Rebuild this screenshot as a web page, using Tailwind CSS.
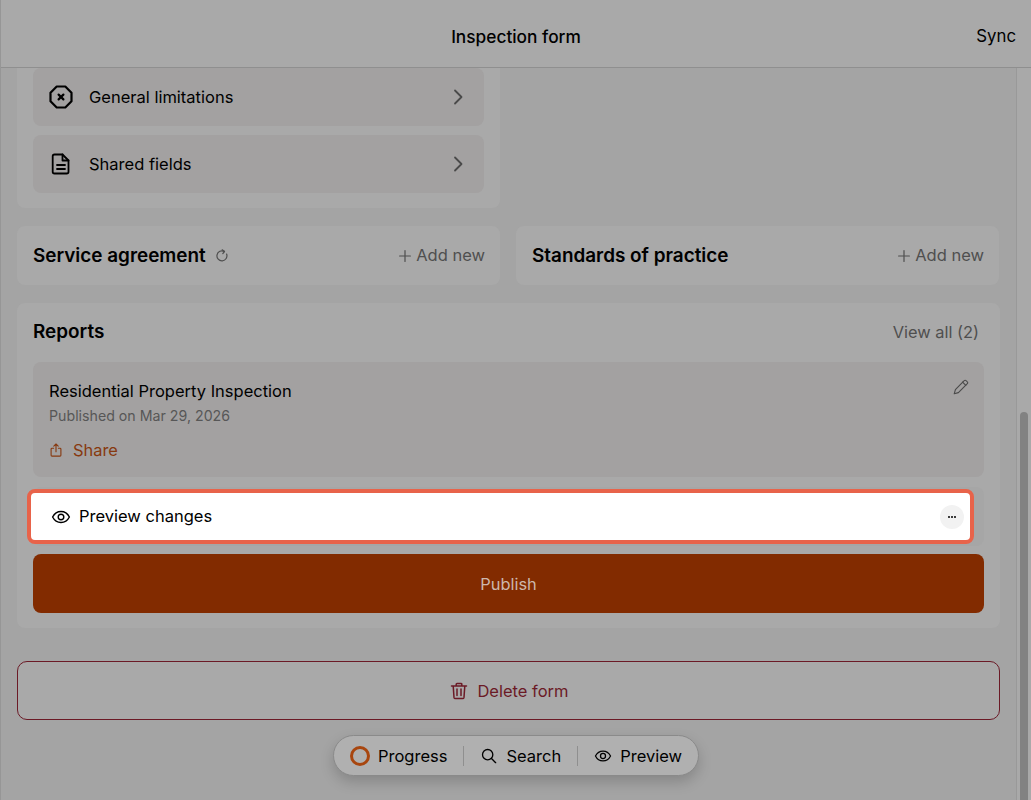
<!DOCTYPE html>
<html lang="en">
<head>
  <meta charset="UTF-8" />
  <title>Inspection form</title>
  <script src="https://cdn.jsdelivr.net/npm/@tailwindcss/browser@4"></script>
</head>
<body class="bg-[#a4a4a4] font-['Inter',sans-serif] text-black overflow-hidden">
  <div class="relative h-[800px] w-[1031px] overflow-hidden border-l border-[#969696]">
    <!-- header -->
    <header class="relative z-10 flex h-[68px] items-center justify-center border-b border-[#8f8f8f] bg-[#a9a9a9] pt-[6px]">
      <h1 class="text-[17.3px] font-medium">Inspection form</h1>
      <button class="absolute right-[15px] top-[25px] text-[16.8px] leading-[22px]">Sync</button>
    </header>

    <div class="flex h-[732px]">
      <main class="w-[1015px] shrink-0 overflow-hidden pl-4 pr-[15px]">
        <!-- top row, scrolled under the header -->
        <section class="mt-[-20px] flex w-[483px] flex-col gap-[9px] rounded-b-lg bg-[#a9a9a9] px-4 pb-[15px] pt-[20px]">
          <div class="flex h-[58px] items-center rounded-lg bg-[#a3a1a1] pl-4 pr-[18px]">
            <svg class="h-6 w-6" viewBox="0 0 24 24" fill="none" stroke="#000" stroke-width="2.200" stroke-linecap="round" stroke-linejoin="round"><path d="M7.700 1.500h8.600l6.200 6.200v8.600l-6.200 6.200H7.700l-6.200-6.200V7.700z"/><path d="M9.600 9.600l4.800 4.800M14.400 9.600l-4.800 4.800"/></svg>
            <span class="ml-4 flex-1 text-[16.500px]">General limitations</span>
            <svg class="h-4 w-4" viewBox="0 0 16 16" fill="none" stroke="#4a4a4a" stroke-width="1.800" stroke-linecap="round" stroke-linejoin="round"><path d="M5 1.500L11.500 8 5 14.500"/></svg>
          </div>
          <div class="flex h-[58px] items-center rounded-lg bg-[#a3a1a1] pl-4 pr-[18px]">
            <svg class="h-6 w-6" viewBox="0 0 24 24" fill="none" stroke="#000" stroke-width="1.800" stroke-linecap="round" stroke-linejoin="round"><path d="M5.500 2.500h8l6 6v11.200a1.800 1.800 0 0 1-1.800 1.800H5.500a1.800 1.800 0 0 1-1.800-1.800V4.300a1.800 1.800 0 0 1 1.800-1.800z"/><path d="M13.500 2.500v6h6M8 13h8M8 17h8"/></svg>
            <span class="ml-4 flex-1 text-[16.500px]">Shared fields</span>
            <svg class="h-4 w-4" viewBox="0 0 16 16" fill="none" stroke="#4a4a4a" stroke-width="1.800" stroke-linecap="round" stroke-linejoin="round"><path d="M5 1.500L11.500 8 5 14.500"/></svg>
          </div>
        </section>

        <div class="mt-[18px] flex gap-4">
          <section class="flex h-[59px] w-[483px] items-center rounded-lg bg-[#a9a9a9] pl-4 pr-[15px]">
            <h2 class="pt-px text-[18.900px] font-semibold">Service agreement</h2>
            <svg class="ml-[9px] h-[14px] w-[14px]" viewBox="0 0 14 14" fill="none" stroke="#4f4f4f" stroke-width="1.200" stroke-linecap="round" stroke-linejoin="round"><path d="M11.600 5a5 5 0 1 1-2.300-2.600"/><path d="M7.200 0.800l2.300 1.700-1.700 2.100"/></svg>
            <button class="ml-auto flex items-center gap-[5px] text-[16.500px] text-[#4f4f4f]"><svg class="h-3 w-3" viewBox="0 0 12 12" stroke="#4f4f4f" stroke-width="1.200" stroke-linecap="round"><path d="M6 .6v10.800M.6 6h10.800"/></svg>Add new</button>
          </section>
          <section class="flex h-[59px] w-[483px] items-center rounded-lg bg-[#a9a9a9] pl-4 pr-[15px]">
            <h2 class="pt-px text-[18.900px] font-semibold">Standards of practice</h2>
            <button class="ml-auto flex items-center gap-[5px] text-[16.500px] text-[#4f4f4f]"><svg class="h-3 w-3" viewBox="0 0 12 12" stroke="#4f4f4f" stroke-width="1.200" stroke-linecap="round"><path d="M6 .6v10.800M.6 6h10.800"/></svg>Add new</button>
          </section>
        </div>

        <!-- reports -->
        <section class="mt-[18px] h-[325px] w-[983px] rounded-lg bg-[#a9a9a9] px-4 pt-[14px]">
          <div class="flex h-[30px] items-center justify-between pr-[5px]">
            <h2 class="pt-px text-[18.900px] font-semibold">Reports</h2>
            <span class="text-[16.400px] text-[#4f4f4f]">View all (2)</span>
          </div>
          <div class="mt-[15px] flex h-[115px] items-start rounded-lg bg-[#a3a1a1] px-4 pt-[17px]">
            <div class="flex-1">
              <p class="text-[16.500px] leading-6">Residential Property Inspection</p>
              <p class="mt-[3px] text-[14.200px] leading-5 text-[#575757]">Published on Mar 29, 2026</p>
              <div class="mt-[12px] flex items-center gap-[10px] text-[16.400px] leading-6 text-[#87390f]">
                <svg class="h-[14px] w-[14px]" viewBox="0 0 14 14" fill="none" stroke="#87390f" stroke-width="1.100" stroke-linecap="round" stroke-linejoin="round"><path d="M7 8.800V1M4.800 3.100L7 1l2.200 2.100"/><path d="M4.600 5.200H3a.9.9 0 0 0-.9.9v6.100a.9.9 0 0 0 .9.9h8a.9.9 0 0 0 .9-.9V6.100a.9.9 0 0 0-.9-.9H9.400"/></svg>
                Share
              </div>
            </div>
            <svg class="mr-[-1px] h-[16px] w-[16px]" viewBox="0 0 16 16" fill="none" stroke="#4a4a4a" stroke-width="1.100" stroke-linecap="round" stroke-linejoin="round"><path d="M11.200 1.600a1.300 1.300 0 0 1 1.900 0l1.200 1.200a1.300 1.300 0 0 1 0 1.900L5.400 13.600 1.200 14.800l1.200-4.200z"/><path d="M9.600 3.200l3.200 3.200"/></svg>
          </div>

          <!-- row under the tour highlight -->
          <div class="relative mt-[10px] h-[59px] rounded-lg bg-[#a6a6a6]">
            <div class="absolute left-[-6px] top-[2px] flex h-[55px] w-[947px] items-center rounded-lg border-[4px] border-[#e8634a] bg-white pl-[20px] pr-[6px]">
              <svg class="h-5 w-5" viewBox="0 0 20 20" fill="none" stroke="#000" stroke-width="1.400" stroke-linecap="round" stroke-linejoin="round"><path d="M1.600 10C3.500 6.300 6.500 4.500 10 4.500s6.500 1.800 8.400 5.500c-1.900 3.700-4.900 5.500-8.400 5.500S3.500 13.700 1.600 10z"/><circle cx="10" cy="10" r="2.800"/></svg>
              <span class="ml-[8px] flex-1 text-[16.500px]">Preview changes</span>
              <span class="flex h-6 w-6 items-center justify-center rounded-full bg-[#f2f2f2]">
                <svg class="h-3 w-3" viewBox="0 0 12 12" fill="#000"><circle cx="3" cy="6" r="1"/><circle cx="6" cy="6" r="1"/><circle cx="9" cy="6" r="1"/></svg>
              </span>
            </div>
          </div>

          <button class="mt-[8px] flex h-[59px] w-full items-center justify-center rounded-lg bg-[#822b00] pt-px text-[16.400px] text-[#cdb8ac]">Publish</button>
        </section>

        <button class="mt-[33px] flex h-[59px] w-[983px] items-center justify-center gap-[9px] rounded-[10px] border-[1.500px] border-[#6b1a26] bg-[#a9a9a9] pl-[2px] pt-px text-[16.500px] text-[#6b1a26]">
          <svg class="mb-px h-[18px] w-[18px]" viewBox="0 0 18 18" fill="none" stroke="#6b1a26" stroke-width="1.500" stroke-linecap="round" stroke-linejoin="round"><path d="M1.500 4h15M6.200 4V2.200a.8.8 0 0 1 .8-.8h4a.8.8 0 0 1 .8.8V4M3.200 4l.8 11.400a1.400 1.400 0 0 0 1.400 1.200h7.200a1.400 1.400 0 0 0 1.400-1.200L14.800 4M7 7v6.500M11 7v6.500"/></svg>
          Delete form
        </button>
      </main>

      <!-- scrollbar -->
      <div class="relative w-[16px] flex-1 border-l border-[#999] bg-[#a9a9a9]">
        <div class="absolute left-[3px] top-[344px] h-[400px] w-[8px] rounded-full bg-[#828282]"></div>
      </div>
    </div>

    <!-- floating toolbar -->
    <nav class="absolute left-[332px] top-[735px] flex h-[41px] w-[366px] items-center rounded-full border border-[#8a8a8a] bg-[#b0b0b0] pl-4 pt-px text-[16.500px] shadow-[0_6px_14px_rgba(0,0,0,0.18)]">
      <span class="h-5 w-5 rounded-full border-[3px] border-[#a8460f]"></span>
      <span class="ml-[8px]">Progress</span>
      <span class="ml-4 h-5 w-px bg-[#8f8f8f]"></span>
      <svg class="ml-[17px] h-4 w-4" viewBox="0 0 18 18" fill="none" stroke="#000" stroke-width="1.500" stroke-linecap="round"><circle cx="7.500" cy="7.500" r="5.800"/><path d="M11.800 11.800l4.700 4.700"/></svg>
      <span class="ml-[9px]">Search</span>
      <span class="ml-4 h-5 w-px bg-[#8f8f8f]"></span>
      <svg class="ml-4 h-[18px] w-[18px]" viewBox="0 0 20 20" fill="none" stroke="#000" stroke-width="1.400" stroke-linecap="round" stroke-linejoin="round"><path d="M1.600 10C3.500 6.300 6.500 4.500 10 4.500s6.500 1.800 8.400 5.500c-1.900 3.700-4.900 5.500-8.400 5.500S3.500 13.700 1.600 10z"/><circle cx="10" cy="10" r="2.800"/></svg>
      <span class="ml-[8px]">Preview</span>
    </nav>
  </div>
</body>
</html>
